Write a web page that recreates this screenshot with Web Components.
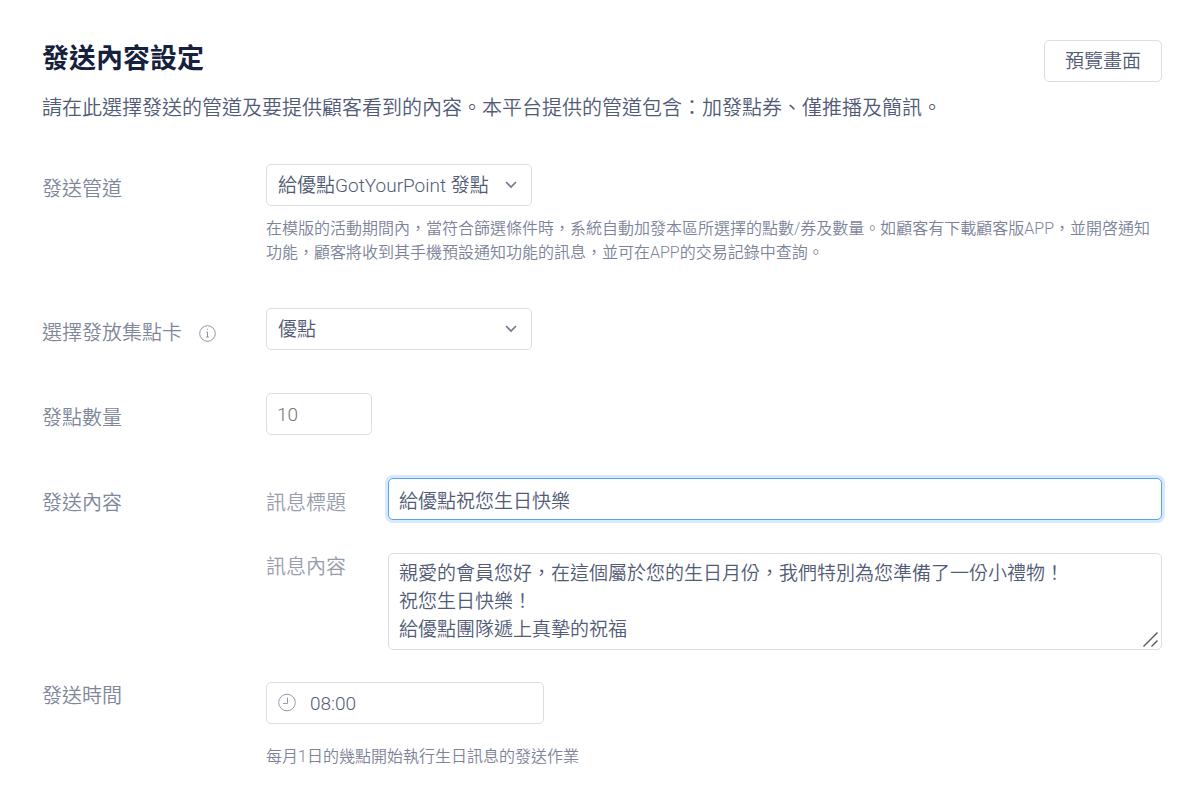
<!DOCTYPE html>
<html lang="zh-Hant">
<head>
<meta charset="utf-8">
<meta name="viewport" content="width=device-width, initial-scale=1">
<title>發送內容設定</title>
<style>
	body {
		margin: 0;
		background: #fff;
		color: #525b76;
		font-family: Roboto, "Noto Sans CJK TC", sans-serif;
		font-size: 19px;
		font-weight: 350;
	}
</style>
</head>
<body>
<send-settings></send-settings>

<script>
const html = String.raw;
const css = String.raw;

const fieldStyle = css`
	:host {
		display: block;
		--border: #dcdee2;
	}

	.row {
		display: grid;
		grid-template-columns: var(--label-width, 224px) minmax(0, 1fr);
	}

	.label {
		display: flex;
		align-items: center;
		align-self: start;
		padding-top: 11px;
		font-size: 20px;
		line-height: 28px;
		color: var(--label-color, #80879a);
	}

	:host([top]) .label {
		padding-top: 0;
	}

	.box {
		display: grid;
		align-items: center;
		max-width: var(--box-width, none);
	}

	.box > * {
		grid-area: 1 / 1;
	}

	input,
	select,
	textarea {
		box-sizing: border-box;
		width: 100%;
		min-width: 0;
		height: 42px;
		margin: 0;
		padding: 0 10px;
		border: 1px solid var(--border);
		border-radius: 5px;
		outline: none;
		background: #fff;
		color: inherit;
		font: inherit;
		appearance: none;
	}

	:host([active]) input,
	input:focus,
	select:focus,
	textarea:focus {
		border-color: #57a3f3;
		box-shadow: 0 0 0 3px #d9e9fc;
	}

	svg {
		fill: none;
		pointer-events: none;
	}

	.help {
		margin: 11px 0 0;
		font-size: 16px;
		line-height: 24px;
		color: #7d8499;
	}

	:host([top]) .help {
		margin-top: 21px;
	}

	.help:empty {
		display: none;
	}
`;

// Label on the left, control and help text on the right.
class FormField extends HTMLElement {
	connectedCallback() {
		if (this.shadowRoot) return;
		this.attachShadow({ mode: "open" });
		this.shadowRoot.innerHTML = html`
			<style>${fieldStyle}${this.styles}</style>
			<div class="row">
				<div class="label">
					<label for="control">${this.getAttribute("label")}</label>
					<slot name="hint"></slot>
				</div>
				<div>
					<div class="box">${this.control}</div>
					<p class="help">${this.getAttribute("help") ?? ""}</p>
				</div>
			</div>
		`;
	}

	get styles() {
		return "";
	}

	get control() {
		return "";
	}
}

class SelectField extends FormField {
	get styles() {
		return css`
			select {
				padding: 0 36px 0 11px;
			}

			svg {
				justify-self: end;
				margin-right: 14px;
				stroke: #70788d;
			}
		`;
	}

	get control() {
		return html`
			<select id="control"><option>${this.getAttribute("value")}</option></select>
			<svg width="13" height="9" viewBox="0 0 13 9" stroke-width="1.6">
				<path d="M1 1 6 6 11 1" />
			</svg>
		`;
	}
}

class TextField extends FormField {
	get control() {
		return html`
			<input
				id="control"
				type="${this.getAttribute("type") ?? "text"}"
				value="${this.getAttribute("value") ?? ""}"
				placeholder="${this.getAttribute("placeholder") ?? ""}"
			>
		`;
	}

	get styles() {
		return css`
			input {
				appearance: textfield;
			}

			input::placeholder {
				color: #757575;
			}
		`;
	}
}

class TimeField extends FormField {
	get styles() {
		return css`
			input {
				padding-left: 43px;
			}

			svg {
				margin-left: 11px;
				stroke: #959baa;
			}
		`;
	}

	get control() {
		return html`
			<input id="control" type="text" value="${this.getAttribute("value")}">
			<svg width="20" height="20" viewBox="0 0 20 20">
				<circle cx="10" cy="9.5" r="8.3" />
				<path d="M10.5 4.5v6H6" />
			</svg>
		`;
	}
}

class AreaField extends FormField {
	get styles() {
		return css`
			textarea {
				display: block;
				height: auto;
				padding: 6px 10px 5px;
				line-height: 28px;
				resize: vertical;
			}

			textarea::-webkit-resizer {
				display: none;
			}

			svg {
				place-self: end;
				margin: 2px;
				stroke: #555;
			}
		`;
	}

	get control() {
		return html`
			<textarea id="control" rows="3">${this.textContent.trim()}</textarea>
			<svg width="18" height="18" viewBox="0 0 18 18" stroke-width="1.4">
				<path d="M1.5 16.5 15.5 2.5M9.5 16.5l6-6" />
			</svg>
		`;
	}
}

class FieldGroup extends HTMLElement {
	connectedCallback() {
		if (this.shadowRoot) return;
		this.attachShadow({ mode: "open" });
		this.shadowRoot.innerHTML = html`
			<style>
				:host {
					display: grid;
					grid-template-columns: 224px minmax(0, 1fr);
				}

				.label {
					padding-top: 11px;
					font-size: 20px;
					line-height: 28px;
					color: #80879a;
				}

				.fields {
					display: grid;
					gap: 33px;
					--label-width: 122px;
					--label-color: #989dab;
				}
			</style>
			<div class="label">${this.getAttribute("label")}</div>
			<div class="fields" role="group" aria-label="${this.getAttribute("label")}"><slot></slot></div>
		`;
	}
}

class InfoHint extends HTMLElement {
	connectedCallback() {
		if (this.shadowRoot) return;
		this.attachShadow({ mode: "open" });
		this.shadowRoot.innerHTML = html`
			<style>
				:host {
					display: flex;
					margin-left: 16px;
				}

				svg {
					fill: none;
					stroke: #858b9b;
				}
			</style>
			<svg width="19" height="19" viewBox="0 0 19 19" stroke-width="0.9">
				<circle cx="9.5" cy="9.5" r="7.8" />
				<path d="M8.3 8h1.2v5M8 13h3M9 5.3h1" />
			</svg>
		`;
	}
}

class SendSettings extends HTMLElement {
	connectedCallback() {
		if (this.shadowRoot) return;
		this.attachShadow({ mode: "open" });
		this.shadowRoot.innerHTML = html`
			<style>
				:host {
					display: block;
					padding: 40px 36px 32px 42px;
				}

				header {
					display: flex;
					align-items: flex-start;
					justify-content: space-between;
					gap: 24px;
					margin-bottom: 40px;
				}

				h1 {
					margin: 0 0 14px;
					font-size: 27px;
					font-weight: 700;
					line-height: 38px;
					color: #16213e;
				}

				p {
					margin: 0;
					font-size: 20px;
					line-height: 32px;
				}

				button {
					flex: none;
					height: 42px;
					padding: 0 20px 4px;
					border: 1px solid #dcdee2;
					border-radius: 5px;
					background: #fff;
					color: inherit;
					font: inherit;
					cursor: pointer;
				}

				form {
					display: grid;
					gap: 43px;
				}

				.message {
					display: grid;
					gap: 32px;
				}

				.choice { --box-width: 266px; }
				.amount { --box-width: 106px; }
				.time { --box-width: 278px; }
			</style>
			<header>
				<div>
					<h1>發送內容設定</h1>
					<p>請在此選擇發送的管道及要提供顧客看到的內容。本平台提供的管道包含：加發點券、僅推播及簡訊。</p>
				</div>
				<button type="button">預覽畫面</button>
			</header>
			<form>
				<select-field
					class="choice"
					label="發送管道"
					value="給優點GotYourPoint 發點"
					help="在模版的活動期間內，當符合篩選條件時，系統自動加發本區所選擇的點數/券及數量。如顧客有下載顧客版APP，並開啓通知功能，顧客將收到其手機預設通知功能的訊息，並可在APP的交易記錄中查詢。"
				></select-field>
				<select-field class="choice" label="選擇發放集點卡" value="優點">
					<info-hint slot="hint"></info-hint>
				</select-field>
				<text-field class="amount" type="number" label="發點數量" placeholder="10"></text-field>
				<div class="message">
					<field-group label="發送內容">
						<text-field active label="訊息標題" value="給優點祝您生日快樂"></text-field>
						<area-field top label="訊息內容">親愛的會員您好，在這個屬於您的生日月份，我們特別為您準備了一份小禮物！
祝您生日快樂！
給優點團隊遞上真摯的祝福</area-field>
					</field-group>
					<time-field
						top
						class="time"
						label="發送時間"
						value="08:00"
						help="每月1日的幾點開始執行生日訊息的發送作業"
					></time-field>
				</div>
			</form>
		`;
	}
}

customElements.define("info-hint", InfoHint);
customElements.define("select-field", SelectField);
customElements.define("text-field", TextField);
customElements.define("time-field", TimeField);
customElements.define("area-field", AreaField);
customElements.define("field-group", FieldGroup);
customElements.define("send-settings", SendSettings);
</script>
</body>
</html>
